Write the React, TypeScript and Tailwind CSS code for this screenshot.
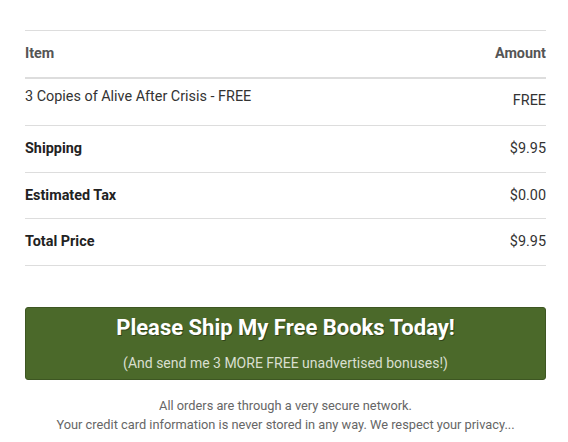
import React from "react";

const rows = [
  { label: "Shipping", amount: "$9.95", h: "h-[47px]" },
  { label: "Estimated Tax", amount: "$0.00", h: "h-[46px]" },
  { label: "Total Price", amount: "$9.95", h: "h-[47px]" },
];

const App: React.FC = () => {
  return (
    <div className="min-h-screen bg-white pt-[30px] pl-[25px] pr-[22px] font-['Roboto',sans-serif]">
      <div className="border-t border-[#dddddd]">
        <div className="flex h-[48px] items-center justify-between border-b-2 border-[#dddddd] text-[14.4px] font-bold text-[#555555]">
          <span>Item</span>
          <span>Amount</span>
        </div>
        <div className="flex h-[47px] justify-between border-b border-[#dddddd] text-[14.4px] leading-[20px] text-[#333333]">
          <span className="pt-[8px]">3 Copies of Alive After Crisis - FREE</span>
          <span className="pt-[12px]">FREE</span>
        </div>
        {rows.map((row) => (
          <div
            key={row.label}
            className={`flex ${row.h} items-center justify-between border-b border-[#dddddd] text-[14.4px] text-[#333333]`}
          >
            <span className="font-bold text-[#222222]">{row.label}</span>
            <span>{row.amount}</span>
          </div>
        ))}
      </div>

      <button className="mt-[41px] flex h-[73px] w-full flex-col items-center rounded-[3px] border border-[#3d5622] bg-[#4b692a] pt-[5px] text-white">
        <span className="text-[22px] font-bold leading-[30px] [text-shadow:1px_1px_0_rgba(0,0,0,0.35)]">
          Please Ship My Free Books Today!
        </span>
        <span className="mt-[10px] text-[14px] leading-[20px] text-[#d9dfd0]">
          (And send me 3 MORE FREE unadvertised bonuses!)
        </span>
      </button>

      <div className="mt-[16px] text-center text-[12.8px] leading-[19px] text-[#666666]">
        <p>All orders are through a very secure network.</p>
        <p>Your credit card information is never stored in any way. We respect your privacy...</p>
      </div>
    </div>
  );
};

export default App;
